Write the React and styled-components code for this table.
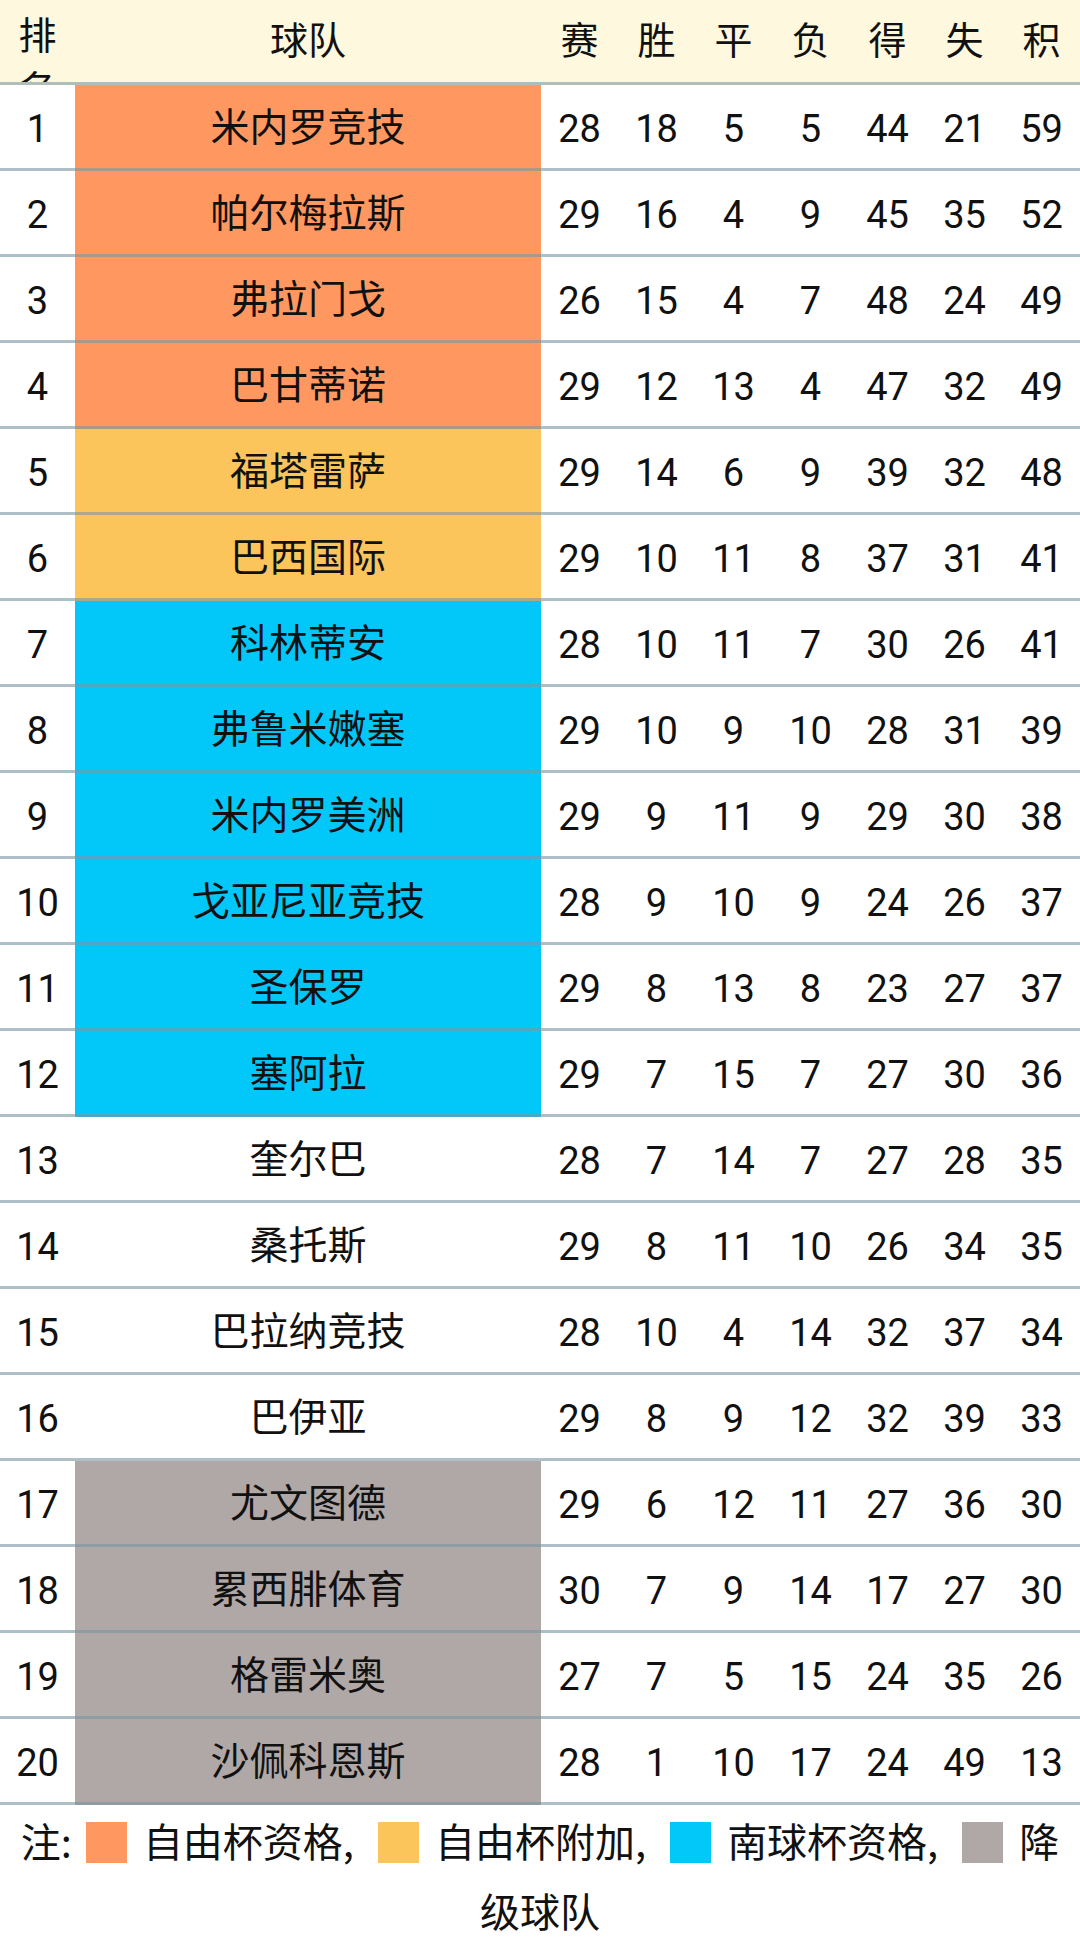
import React from 'react'
import styled, { createGlobalStyle } from 'styled-components'

const GlobalStyle = createGlobalStyle`
  html, body {
    margin: 0;
    padding: 0;
    background: #FFFFFF;
  }
  body {
    font-family: Roboto, "Noto Sans CJK SC", sans-serif;
    color: #111111;
  }
`

const COLORS = {
  libertadores: '#FE9860',
  playoff: '#FBC55B',
  sudamericana: '#02C8F9',
  relegation: '#B0A8A7',
}

const teams = [
  ['米内罗竞技', 'libertadores', 28, 18, 5, 5, 44, 21, 59],
  ['帕尔梅拉斯', 'libertadores', 29, 16, 4, 9, 45, 35, 52],
  ['弗拉门戈', 'libertadores', 26, 15, 4, 7, 48, 24, 49],
  ['巴甘蒂诺', 'libertadores', 29, 12, 13, 4, 47, 32, 49],
  ['福塔雷萨', 'playoff', 29, 14, 6, 9, 39, 32, 48],
  ['巴西国际', 'playoff', 29, 10, 11, 8, 37, 31, 41],
  ['科林蒂安', 'sudamericana', 28, 10, 11, 7, 30, 26, 41],
  ['弗鲁米嫩塞', 'sudamericana', 29, 10, 9, 10, 28, 31, 39],
  ['米内罗美洲', 'sudamericana', 29, 9, 11, 9, 29, 30, 38],
  ['戈亚尼亚竞技', 'sudamericana', 28, 9, 10, 9, 24, 26, 37],
  ['圣保罗', 'sudamericana', 29, 8, 13, 8, 23, 27, 37],
  ['塞阿拉', 'sudamericana', 29, 7, 15, 7, 27, 30, 36],
  ['奎尔巴', null, 28, 7, 14, 7, 27, 28, 35],
  ['桑托斯', null, 29, 8, 11, 10, 26, 34, 35],
  ['巴拉纳竞技', null, 28, 10, 4, 14, 32, 37, 34],
  ['巴伊亚', null, 29, 8, 9, 12, 32, 39, 33],
  ['尤文图德', 'relegation', 29, 6, 12, 11, 27, 36, 30],
  ['累西腓体育', 'relegation', 30, 7, 9, 14, 17, 27, 30],
  ['格雷米奥', 'relegation', 27, 7, 5, 15, 24, 35, 26],
  ['沙佩科恩斯', 'relegation', 28, 1, 10, 17, 24, 49, 13],
]

const statHeaders = ['赛', '胜', '平', '负', '得', '失', '积']

const Page = styled.div`
  width: 1080px;
  background: #FFFFFF;
`

const Row = styled.div`
  display: grid;
  grid-template-columns: 75px 466px repeat(7, 77px);
  height: ${props => props.header ? 85 : 86}px;
  background: ${props => props.header ? '#FEF9DE' : '#FFFFFF'};
`

const Cell = styled.div`
  display: flex;
  align-items: center;
  justify-content: center;
  font-size: 38px;
  line-height: 1;
  border-bottom: 3px solid rgba(120, 150, 160, 0.6);
  background: ${props => props.tone ? COLORS[props.tone] : 'transparent'};
  padding-top: ${props => props.header ? 0 : 4}px;
  box-sizing: border-box;
  white-space: nowrap;
`

const NameText = styled.span`
  font-size: 39px;
`

const RankHead = styled.div`
  font-size: 38px;
  line-height: 54px;
  padding-top: 9px;
  text-align: center;
  overflow: hidden;
  box-sizing: border-box;
  border-bottom: 3px solid rgba(120, 150, 160, 0.6);
  word-break: break-all;
`

const Note = styled.div`
  font-family: "Noto Sans CJK SC", sans-serif;
  font-size: 40px;
  line-height: 70px;
  text-align: center;
  padding: 0 20px;
`

const Swatch = styled.span`
  display: inline-block;
  width: 41px;
  height: 41px;
  vertical-align: -6px;
  margin: 0 16px 0 ${props => props.first ? 14 : 24}px;
  background: ${props => COLORS[props.tone]};
`

export default function App() {
  return (
    <Page>
      <GlobalStyle />
      <Row header>
        <RankHead>排名</RankHead>
        <Cell header>球队</Cell>
        {statHeaders.map(h => <Cell header key={h}>{h}</Cell>)}
      </Row>
      {teams.map(([name, tone, ...stats], i) => (
        <Row key={name}>
          <Cell>{i + 1}</Cell>
          <Cell tone={tone}><NameText>{name}</NameText></Cell>
          {stats.map((s, j) => <Cell key={j}>{s}</Cell>)}
        </Row>
      ))}
      <Note>
        注:<Swatch first tone='libertadores' />自由杯资格,<Swatch tone='playoff' />自由杯附加,<Swatch tone='sudamericana' />南球杯资格,<Swatch tone='relegation' />降级球队
      </Note>
    </Page>
  )
}
